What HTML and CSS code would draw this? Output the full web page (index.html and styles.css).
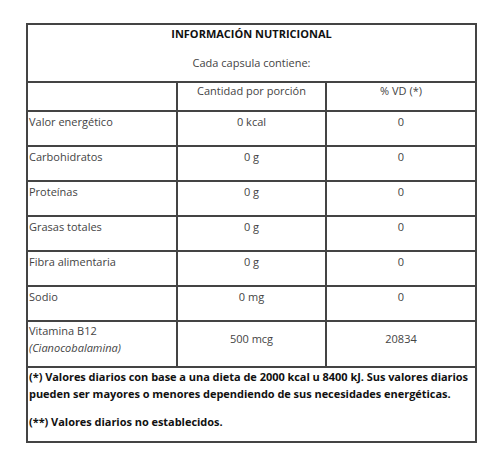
FILE: index.html
```html
<!DOCTYPE html>
<html lang="es">
<head>
<meta charset="utf-8">
<title>Información nutricional</title>
<link rel="stylesheet" href="styles.css">
</head>
<body>
<table class="nutri">
  <colgroup>
    <col class="c1"><col class="c2"><col class="c3">
  </colgroup>
  <tr class="title-row">
    <td colspan="3">
      <p class="title">INFORMACIÓN NUTRICIONAL</p>
      <p class="subtitle">Cada capsula contiene:</p>
    </td>
  </tr>
  <tr class="head-row">
    <td></td>
    <td class="center">Cantidad por porción</td>
    <td class="center">% VD (*)</td>
  </tr>
  <tr class="data-row"><td>Valor energético</td><td class="center">0 kcal</td><td class="center">0</td></tr>
  <tr class="data-row"><td>Carbohidratos</td><td class="center">0 g</td><td class="center">0</td></tr>
  <tr class="data-row"><td>Proteínas</td><td class="center">0 g</td><td class="center">0</td></tr>
  <tr class="data-row"><td>Grasas totales</td><td class="center">0 g</td><td class="center">0</td></tr>
  <tr class="data-row"><td>Fibra alimentaria</td><td class="center">0 g</td><td class="center">0</td></tr>
  <tr class="data-row"><td>Sodio</td><td class="center">0 mg</td><td class="center">0</td></tr>
  <tr class="vit-row">
    <td>Vitamina B12<br><em>(Cianocobalamina)</em></td>
    <td class="center mid">500 mcg</td>
    <td class="center mid">20834</td>
  </tr>
  <tr class="foot-row">
    <td colspan="3">
      <p class="note">(*) Valores diarios con base a una dieta de 2000 kcal u 8400 kJ. Sus valores diarios pueden ser mayores o menores dependiendo de sus necesidades energéticas.</p>
      <p class="note">(**) Valores diarios no establecidos.</p>
    </td>
  </tr>
</table>
</body>
</html>
```

FILE: styles.css
```css
html, body {
  margin: 0;
  padding: 0;
  background: #fff;
}

body {
  font-family: "Open Sans", "Liberation Sans", sans-serif;
  font-size: 11px;
  line-height: 16.5px;
  color: #444;
}

.nutri {
  border-collapse: collapse;
  margin: 23px 0 0 26px;
  width: 449px;
  table-layout: fixed;
}

.c1 { width: 150px; }
.c2 { width: 149px; }
.c3 { width: 150px; }

.nutri td {
  border: 2px solid #444;
  padding: 0 1px;
  vertical-align: top;
  text-align: left;
}

.nutri td.center { text-align: center; }

.nutri p { margin: 0; }

.title-row td {
  height: 55px;
  padding-top: 1px;
  text-align: center;
}

.title {
  font-weight: 700;
  color: #111;
}

.subtitle {
  margin-top: 12px !important;
}

.head-row td {
  height: 27px;
  padding-top: 0;
}

.data-row td {
  height: 31px;
  padding-top: 2px;
}

.vit-row td {
  height: 43px;
  padding-top: 1px;
}

.vit-row td.mid {
  height: 35px;
  padding-top: 9px;
}

.vit-row em { font-style: italic; }

.foot-row td {
  height: 72px;
  padding-top: 1px;
}

.note {
  font-weight: 700;
  color: #111;
  line-height: 16.7px;
  letter-spacing: -0.04px;
}

.note + .note { margin-top: 12px !important; }
```
